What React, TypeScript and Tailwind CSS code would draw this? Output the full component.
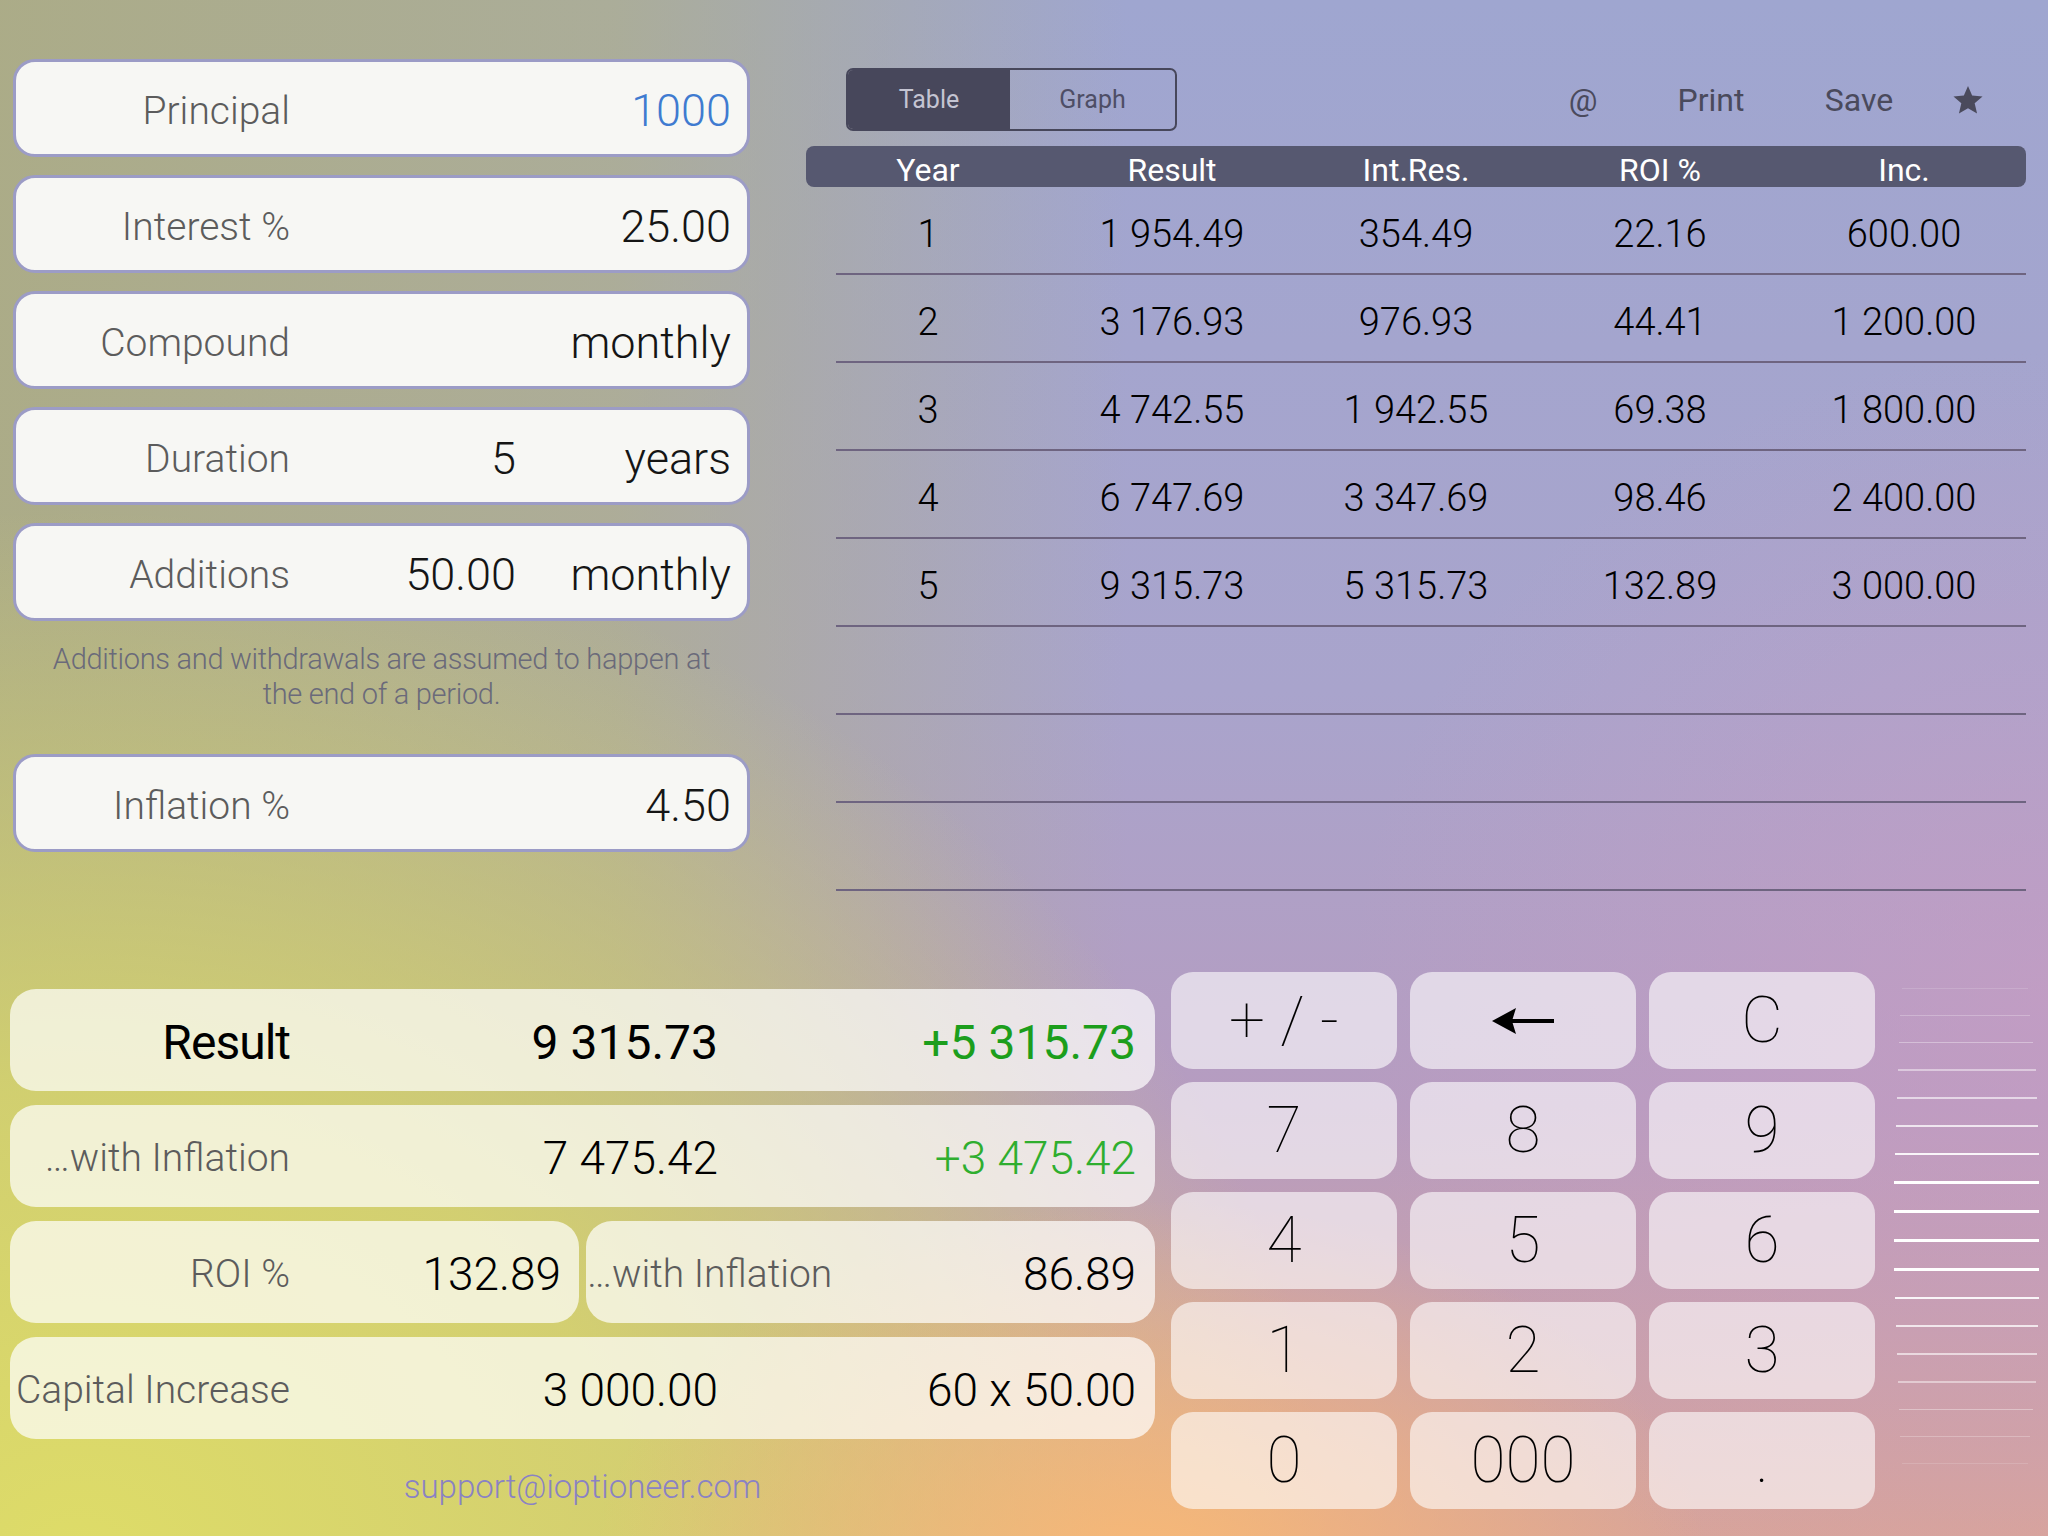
import React from 'react';

interface Row {
  year: string;
  result: string;
  intRes: string;
  roi: string;
  inc: string;
}

const rows: Row[] = [
  { year: '1', result: '1 954.49', intRes: '354.49', roi: '22.16', inc: '600.00' },
  { year: '2', result: '3 176.93', intRes: '976.93', roi: '44.41', inc: '1 200.00' },
  { year: '3', result: '4 742.55', intRes: '1 942.55', roi: '69.38', inc: '1 800.00' },
  { year: '4', result: '6 747.69', intRes: '3 347.69', roi: '98.46', inc: '2 400.00' },
  { year: '5', result: '9 315.73', intRes: '5 315.73', roi: '132.89', inc: '3 000.00' },
  { year: '', result: '', intRes: '', roi: '', inc: '' },
  { year: '', result: '', intRes: '', roi: '', inc: '' },
  { year: '', result: '', intRes: '', roi: '', inc: '' },
];

// decorative slider lines at the right edge
const ticks = [
  'w-[126px] ml-[8px] h-px bg-white/15',
  'w-[130px] ml-[6px] h-px bg-white/25',
  'w-[134px] ml-[5px] h-px bg-white/35',
  'w-[138px] ml-[4px] h-[2px] bg-white/45',
  'w-[140px] ml-[3px] h-[2px] bg-white/60',
  'w-[142px] ml-[2px] h-[2px] bg-white/75',
  'w-[144px] ml-[1px] h-[2px] bg-white/90',
  'w-[145px] ml-0 h-[3px] bg-white',
  'w-[145px] ml-0 h-[3px] bg-white',
  'w-[145px] ml-0 h-[3px] bg-white',
  'w-[145px] ml-0 h-[3px] bg-white',
  'w-[144px] ml-[1px] h-[2px] bg-white/90',
  'w-[142px] ml-[2px] h-[2px] bg-white/75',
  'w-[140px] ml-[3px] h-[2px] bg-white/60',
  'w-[138px] ml-[4px] h-[2px] bg-white/45',
  'w-[134px] ml-[5px] h-px bg-white/35',
  'w-[130px] ml-[6px] h-px bg-white/25',
  'w-[126px] ml-[8px] h-px bg-white/15',
];

const InputCard: React.FC<{ label: string; children: React.ReactNode }> = ({ label, children }) => (
  <div className="flex h-[98px] items-center rounded-[22px] border-[3px] border-[#9c9cc6] bg-[#f7f7f4] pt-[6px] pr-[16px]">
    <div className="w-[274px] text-right text-[39px] font-light text-[#5c5c5c]">{label}</div>
    {children}
  </div>
);

const ArrowLeft = () => (
  <svg width="62" height="28" viewBox="0 0 62 28">
    <path d="M0 14 L24 1 L20 14 L24 27 Z" fill="#000" />
    <rect x="18" y="12" width="44" height="4" fill="#000" />
  </svg>
);

const keys: React.ReactNode[] = ['+ / -', <ArrowLeft key="a" />, 'C', '7', '8', '9', '4', '5', '6', '1', '2', '3', '0', '000', '.'];

export default function App() {
  return (
    <div className="relative h-[1536px] w-[2048px] overflow-hidden font-['Roboto',sans-serif] bg-[image:radial-gradient(ellipse_560px_380px_at_1150px_1580px,rgba(248,184,118,1),rgba(248,184,118,0)),radial-gradient(ellipse_1250px_1050px_at_80px_1560px,rgba(222,220,104,1)_0%,rgba(218,216,106,0.8)_45%,rgba(210,210,110,0)_100%),linear-gradient(90deg,rgba(172,172,132,0.95)_0%,rgba(176,176,130,0.7)_30%,rgba(176,176,130,0)_55%),radial-gradient(ellipse_700px_650px_at_2048px_1000px,rgba(204,156,196,0.55),rgba(204,160,204,0)),linear-gradient(180deg,#9fa6d0_0%,#a9a4cc_45%,#b69cc0_72%,#d8a49a_100%)]">
      {/* top section */}
      <div className="flex h-[972px]">
        {/* inputs */}
        <div className="ml-[13px] flex w-[737px] flex-col pt-[59px]">
          <div className="flex flex-col gap-[18px]">
            <InputCard label="Principal">
              <div className="flex-1 text-right text-[45px] font-light text-[#3f7bd0]">1000</div>
            </InputCard>
            <InputCard label="Interest %">
              <div className="flex-1 text-right text-[45px] font-light text-[#151515]">25.00</div>
            </InputCard>
            <InputCard label="Compound">
              <div className="flex-1 text-right text-[45px] font-light text-[#151515]">monthly</div>
            </InputCard>
            <InputCard label="Duration">
              <div className="w-[226px] text-right text-[45px] font-light text-[#151515]">5</div>
              <div className="flex-1 text-right text-[45px] font-light text-[#151515]">years</div>
            </InputCard>
            <InputCard label="Additions">
              <div className="w-[226px] text-right text-[45px] font-light text-[#151515]">50.00</div>
              <div className="flex-1 text-right text-[45px] font-light text-[#151515]">monthly</div>
            </InputCard>
          </div>
          <p className="mt-[21px] text-center text-[29px] leading-[35px] font-light tracking-[-0.3px] text-[#6a6a7a]">
            Additions and withdrawals are assumed to happen at
            <br />
            the end of a period.
          </p>
          <div className="mt-[42px]">
            <InputCard label="Inflation %">
              <div className="flex-1 text-right text-[45px] font-light text-[#151515]">4.50</div>
            </InputCard>
          </div>
        </div>

        {/* table */}
        <div className="ml-[56px] flex w-[1220px] flex-col pt-[68px]">
          <div className="flex h-[63px] items-center">
            <div className="ml-[40px] flex h-[63px] w-[331px] overflow-hidden rounded-[7px] border-2 border-[#47475b]">
              <div className="flex w-[162px] items-center justify-center bg-[#47475b] text-[25px] text-[#c4c4d2]">Table</div>
              <div className="flex flex-1 items-center justify-center text-[25px] text-[#4e4e66]">Graph</div>
            </div>
            <div className="ml-[356px] w-[100px] text-center text-[32px] text-[#4a4a5c]">@</div>
            <div className="ml-[28px] w-[100px] text-center text-[32px] text-[#4a4a5c]">Print</div>
            <div className="ml-[48px] w-[100px] text-center text-[32px] text-[#4a4a5c]">Save</div>
            <div className="ml-[9px] flex w-[100px] justify-center">
              <svg width="32" height="32" viewBox="0 0 24 24">
                <path d="M12 1.5l3.1 7.2 7.8.7-5.9 5.1 1.8 7.6L12 18.1l-6.8 4 1.8-7.6-5.9-5.1 7.8-.7z" fill="#4a4a5c" />
              </svg>
            </div>
          </div>
          <div className="mt-[15px] grid h-[41px] grid-cols-5 items-center rounded-[8px] bg-[#565870] text-center text-[32px] text-white">
            <div>Year</div>
            <div>Result</div>
            <div>Int.Res.</div>
            <div>ROI %</div>
            <div>Inc.</div>
          </div>
          {rows.map((r, i) => (
            <div key={i} className="flex flex-col">
              <div className="grid h-[86px] grid-cols-5 items-center pt-[8px] text-center text-[38px] font-light text-black">
                <div>{r.year}</div>
                <div>{r.result}</div>
                <div>{r.intRes}</div>
                <div>{r.roi}</div>
                <div>{r.inc}</div>
              </div>
              <div className="ml-[30px] h-[2px] bg-[#6e6480]" />
            </div>
          ))}
        </div>
      </div>

      {/* bottom section */}
      <div className="flex">
        <div className="ml-[10px] flex w-[1145px] flex-col pt-[17px]">
          <div className="flex flex-col gap-[14px]">
            <div className="flex h-[102px] items-center rounded-[26px] bg-white/70 pt-[5px]">
              <div className="w-[280px] text-right text-[48px] tracking-[-1px] text-black">Result</div>
              <div className="w-[428px] text-right text-[48px] text-black">9 315.73</div>
              <div className="flex-1 pr-[19px] text-right text-[48px] text-[#1c9e1c]">+5 315.73</div>
            </div>
            <div className="flex h-[102px] items-center rounded-[26px] bg-white/70 pt-[5px]">
              <div className="w-[280px] text-right text-[39px] font-light whitespace-nowrap text-[#5c5c5c]">…with Inflation</div>
              <div className="w-[428px] text-right text-[46px] font-light text-black">7 475.42</div>
              <div className="flex-1 pr-[19px] text-right text-[46px] font-light text-[#2fae2f]">+3 475.42</div>
            </div>
            <div className="flex h-[102px] gap-[7px]">
              <div className="flex w-[569px] items-center rounded-[26px] bg-white/70 pt-[5px]">
                <div className="w-[280px] text-right text-[39px] font-light text-[#5c5c5c]">ROI %</div>
                <div className="flex-1 pr-[18px] text-right text-[46px] font-light text-black">132.89</div>
              </div>
              <div className="flex flex-1 items-center rounded-[26px] bg-white/70 pt-[5px]">
                <div className="pl-[1px] text-[39px] font-light whitespace-nowrap text-[#5c5c5c]">…with Inflation</div>
                <div className="flex-1 pr-[19px] text-right text-[46px] font-light text-black">86.89</div>
              </div>
            </div>
            <div className="flex h-[102px] items-center rounded-[26px] bg-white/70 pt-[5px]">
              <div className="w-[280px] text-right text-[39px] font-light whitespace-nowrap text-[#5c5c5c]">Capital Increase</div>
              <div className="w-[428px] text-right text-[46px] font-light text-black">3 000.00</div>
              <div className="flex-1 pr-[19px] text-right text-[46px] font-light text-black">60 x 50.00</div>
            </div>
          </div>
          <div className="mt-[23px] text-center text-[33px] font-light text-[#8a82c4]">support@ioptioneer.com</div>
        </div>

        {/* keypad */}
        <div className="ml-[16px] grid grid-cols-[repeat(3,226px)] gap-x-[13px] gap-y-[11px]">
          {keys.map((k, i) => (
            <div
              key={i}
              className="flex h-[97px] items-center justify-center rounded-[22px] bg-white/60 text-[64px] font-thin text-black"
            >
              {k}
            </div>
          ))}
        </div>

        {/* slider ticks */}
        <div className="ml-[19px] flex flex-col gap-[26px] pt-[16px]">
          {ticks.map((t, i) => (
            <div key={i} className={t} />
          ))}
        </div>
      </div>
    </div>
  );
}
